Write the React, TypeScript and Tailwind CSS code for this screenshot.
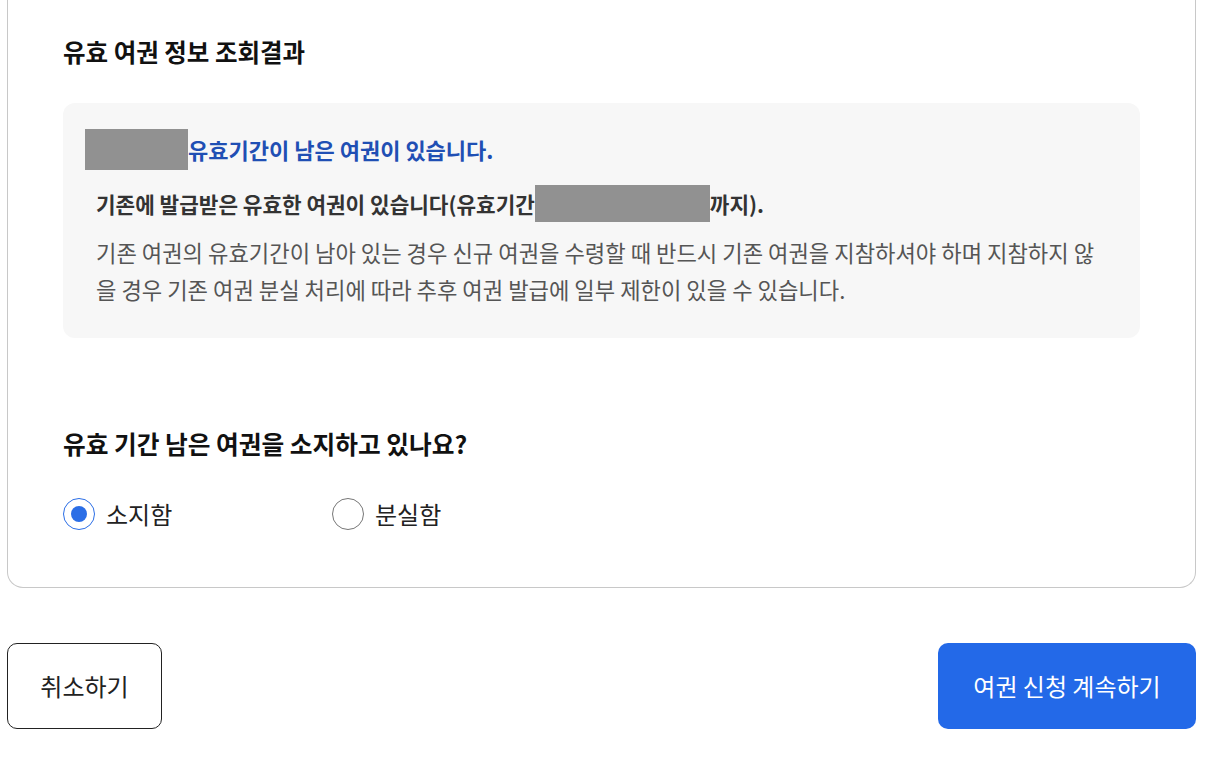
import React, { useState } from 'react';

const font = { fontFamily: '"Noto Sans CJK KR", "Noto Sans", sans-serif' };

const Radio: React.FC<{ checked: boolean; label: string; onClick: () => void }> = ({ checked, label, onClick }) => (
  <button type="button" onClick={onClick} className="flex items-center gap-[11px]">
    <span
      className={`flex h-[32px] w-[32px] items-center justify-center rounded-full border ${
        checked ? 'border-[#2b6ee6]' : 'border-[#777]'
      }`}
    >
      {checked && <span className="h-[16px] w-[16px] rounded-full bg-[#2b6ee6]" />}
    </span>
    <span className="text-[24px] leading-[32px] text-[#222]">{label}</span>
  </button>
);

export default function App() {
  const [own, setOwn] = useState(true);

  return (
    <div style={font} className="min-h-[763px] bg-white">
      <div className="ml-[7px] w-[1189px]">
        <div className="rounded-b-2xl border-x border-b border-[#c8c8c8] pl-[55px] pr-[55px] pt-[37px] pb-[57px]">
          <h2 className="text-[24.5px] font-bold leading-[30px] text-[#111]">유효 여권 정보 조회결과</h2>

          <div className="mt-[36px] rounded-xl bg-[#f7f7f7] pl-[22px] pr-[30px] pt-[26px] pb-[30px]">
            <div className="flex h-[41px] items-center">
              <span className="h-[41px] w-[103px] bg-[#919191]" />
              <span className="text-[22px] font-bold text-[#1f4fb4]">유효기간이 남은 여권이 있습니다.</span>
            </div>
            <div className="ml-[11px] mt-[15px] flex h-[37px] items-center text-[21.3px] font-bold text-[#333]">
              <span>기존에 발급받은 유효한 여권이 있습니다(유효기간</span>
              <span className="h-[37px] w-[175px] bg-[#919191]" />
              <span>까지).</span>
            </div>
            <p className="ml-[11px] mt-[12px] text-[22.2px] leading-[37px] text-[#555]">
              기존 여권의 유효기간이 남아 있는 경우 신규 여권을 수령할 때 반드시 기존 여권을 지참하셔야 하며 지참하지 않
              <br />
              을 경우 기존 여권 분실 처리에 따라 추후 여권 발급에 일부 제한이 있을 수 있습니다.
            </p>
          </div>

          <h3 className="mt-[90px] text-[24.7px] font-bold leading-[30px] text-[#111]">유효 기간 남은 여권을 소지하고 있나요?</h3>

          <div className="mt-[40px] flex items-center">
            <div className="w-[269px]">
              <Radio checked={own} label="소지함" onClick={() => setOwn(true)} />
            </div>
            <Radio checked={!own} label="분실함" onClick={() => setOwn(false)} />
          </div>
        </div>

        <div className="mt-[55px] flex justify-between">
          <button
            type="button"
            className="h-[86px] w-[155px] rounded-[10px] border border-[#222] bg-white text-[24px] text-[#222]"
          >
            취소하기
          </button>
          <button
            type="button"
            className="h-[86px] w-[258px] rounded-[10px] bg-[#2369e8] text-[24px] text-white"
          >
            여권 신청 계속하기
          </button>
        </div>
      </div>
    </div>
  );
}
